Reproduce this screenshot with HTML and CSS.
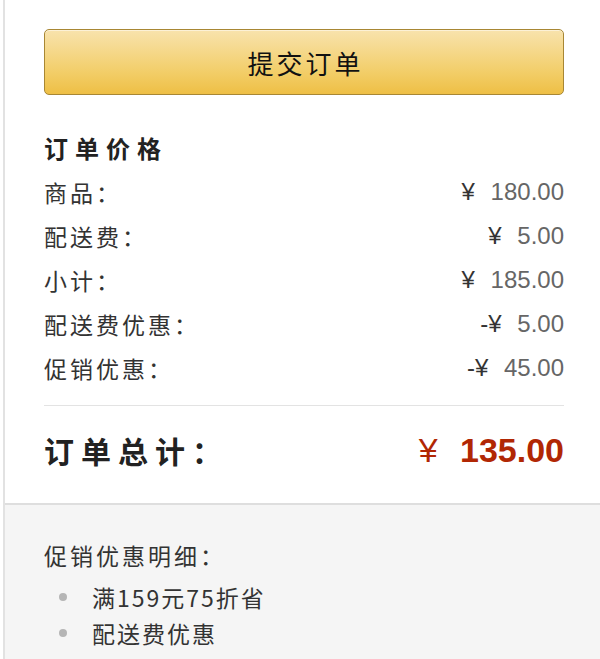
FILE: index.html
```html
<!DOCTYPE html>
<html lang="zh">
<head>
<meta charset="utf-8">
<title>订单</title>
<link rel="stylesheet" href="styles.css">
</head>
<body>
<div class="frame">
  <div class="panel">
    <button class="submit">提交订单</button>
    <div class="heading">订单价格</div>
    <div class="row"><span class="label">商品：</span><span class="amount"><span class="yen">¥</span> 180.00</span></div>
    <div class="row"><span class="label">配送费：</span><span class="amount"><span class="yen">¥</span> 5.00</span></div>
    <div class="row"><span class="label">小计：</span><span class="amount"><span class="yen">¥</span> 185.00</span></div>
    <div class="row"><span class="label">配送费优惠：</span><span class="amount"><span class="yen">-¥</span> 5.00</span></div>
    <div class="row"><span class="label">促销优惠：</span><span class="amount"><span class="yen">-¥</span> 45.00</span></div>
    <div class="total">
      <span class="total-label">订单总计：</span>
      <span class="total-amount"><span class="total-yen">¥</span> 135.00</span>
    </div>
  </div>
  <div class="promo">
    <div class="promo-title">促销优惠明细：</div>
    <ul class="promo-list">
      <li>满159元75折省</li>
      <li>配送费优惠</li>
    </ul>
  </div>
</div>
</body>
</html>
```

FILE: styles.css
```css
html, body {
  margin: 0;
  padding: 0;
  background: #ffffff;
}
body {
  font-family: "Noto Sans CJK SC", "Liberation Sans", sans-serif;
  color: #333;
  padding-left: 3px;
}
.frame {
  border-left: 2px solid #e2e2e2;
  min-height: 659px;
  background: #f5f5f5;
}
.panel {
  background: #fff;
  padding: 29px 36px 23px 39px;
  border-bottom: 2px solid #dedede;
}
.submit {
  display: block;
  width: 100%;
  height: 66px;
  margin: 0;
  padding: 0 0 0 3px;
  border: 1px solid #a88734;
  border-radius: 5px;
  background: linear-gradient(to bottom, #f8e3ad 0%, #f2cc64 70%, #eebf45 100%);
  box-shadow: inset 0 1px 0 rgba(255,255,255,0.5);
  font-family: "Noto Sans CJK SC", sans-serif;
  font-size: 26px;
  letter-spacing: 3px;
  color: #111;
  cursor: pointer;
}
.heading {
  margin-top: 31px;
  font-size: 24px;
  line-height: 44px;
  font-weight: bold;
  letter-spacing: 7px;
  color: #222;
}
.row {
  display: flex;
  justify-content: space-between;
  align-items: center;
  height: 44px;
}
.label {
  font-size: 23px;
  letter-spacing: 3px;
  color: #333;
}
.amount {
  font-family: "Liberation Sans", Arial, sans-serif;
  font-size: 24px;
  color: #666;
}
.yen {
  color: #333;
  margin-right: 9px;
}
.total {
  margin-top: 15px;
  border-top: 1px solid #e3e3e3;
  padding-top: 14px;
  display: flex;
  justify-content: space-between;
  align-items: center;
  height: 60px;
}
.total-label {
  font-size: 30px;
  font-weight: bold;
  color: #222;
  letter-spacing: 7px;
}
.total-amount {
  font-family: "Liberation Sans", Arial, sans-serif;
  font-size: 34px;
  font-weight: bold;
  color: #b12704;
}
.total-yen {
  font-weight: normal;
  margin-right: 13px;
}
.promo {
  padding: 32px 36px 0 39px;
}
.promo-title {
  font-size: 23px;
  line-height: 36px;
  letter-spacing: 3px;
  margin-bottom: 6px;
  color: #333;
}
.promo-list {
  list-style: none;
  margin: 0;
  padding: 0;
}
.promo-list li {
  display: flex;
  align-items: center;
  font-size: 23px;
  line-height: 36px;
  letter-spacing: 2px;
  color: #333;
}
.promo-list li::before {
  content: "";
  width: 8px;
  height: 8px;
  border-radius: 50%;
  background: #b5b5b5;
  margin-left: 15px;
  margin-right: 25px;
}
```
